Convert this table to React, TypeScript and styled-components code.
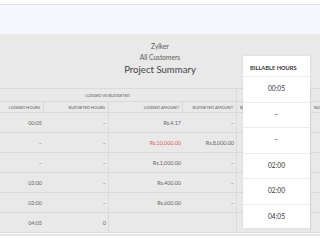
import React from "react";
import styled, { createGlobalStyle } from "styled-components";

const GlobalStyle = createGlobalStyle`
    html, body {
        margin: 0;
        padding: 0;
        background: #ffffff;
        font-family: Lato, "Open Sans", sans-serif;
        overflow: hidden;
    }
`;

const Page = styled.div`
    width: 320px;
    height: 240px;
    position: relative;
    overflow: hidden;
    background: #ffffff;
`;
const TopStrip = styled.div`
    height: 4px;
    border-bottom: 1px solid #e2e2e2;
`;
const InfoBand = styled.div`
    height: 29px;
    background: #f4f8fd;
`;
const Report = styled.div`
    height: 198px;
    background: #e9e9e9;
    border-bottom: 2px solid #ffffff;
    box-shadow: 0 2px 0 #e4e4e4;
`;
const Heading = styled.div`
    height: 54px;
    display: flex;
    flex-direction: column;
    align-items: center;
    padding-top: 7px;
    box-sizing: border-box;
    color: #5a5a5a;
`;
const Org = styled.div`
    font-size: 6.6px;
    line-height: 11px;
`;
const Title = styled.div`
    font-size: 9.6px;
    line-height: 13px;
    color: #444;
`;
const Table = styled.div`
    margin-left: -21px;
    display: grid;
    grid-template-columns: 65px 65px 74px 54px 74px 60px;
`;
const GroupHead = styled.div<{ span: number; line?: boolean }>`
    grid-column: span ${(p) => p.span};
    height: 14px;
    line-height: 14px;
    text-align: center;
    font-size: 4px;
    color: #555;
    border-top: 1px solid #dadada;
    border-bottom: 1px solid #dadada;
    border-right: ${(p) => (p.line ? "1px solid #dadada" : "none")};
    box-sizing: border-box;
`;
const ColHead = styled.div<{ line?: boolean; align?: string }>`
    height: 11px;
    line-height: 11px;
    padding: 0 3px;
    text-align: ${(p) => p.align || "right"};
    font-size: 4px;
    color: #555;
    white-space: nowrap;
    overflow: hidden;
    border-right: ${(p) => (p.line ? "1px solid #dadada" : "none")};
    border-bottom: 1px solid #dadada;
    box-sizing: border-box;
`;
const Cell = styled.div<{ line?: boolean; red?: boolean }>`
    height: 20px;
    line-height: 20px;
    padding: 0 2px;
    text-align: right;
    font-size: 5.4px;
    color: ${(p) => (p.red ? "#e0584f" : "#666")};
    white-space: nowrap;
    border-right: ${(p) => (p.line ? "1px solid #dadada" : "none")};
    border-bottom: 1px solid #dadada;
    box-sizing: border-box;
`;
const Card = styled.div`
    position: absolute;
    left: 243px;
    top: 56px;
    width: 67px;
    background: #ffffff;
    box-shadow: 0 0 3px rgba(0, 0, 0, 0.08);
`;
const CardHead = styled.div`
    height: 21px;
    line-height: 24px;
    padding-left: 7px;
    font-size: 5.7px;
    font-weight: 700;
    color: #333;
    white-space: nowrap;
    border-bottom: 1px solid #ececec;
    box-sizing: border-box;
`;
const CardCell = styled.div<{ last?: boolean }>`
    height: ${(p) => (p.last ? "23px" : "25.5px")};
    line-height: 23px;
    text-align: center;
    font-size: 6.6px;
    color: #333;
    border-bottom: ${(p) => (p.last ? "none" : "1px solid #ececec")};
    box-sizing: border-box;
`;

type Row = { hours: string; budHours: string; amount: string; budAmount: string; billable: string; red?: boolean };

const rows: Row[] = [
    { hours: "00:05", budHours: "–", amount: "Rs.4.17", budAmount: "–", billable: "00:05" },
    { hours: "–", budHours: "–", amount: "Rs.10,000.00", budAmount: "Rs.8,000.00", billable: "–", red: true },
    { hours: "–", budHours: "–", amount: "Rs.1,000.00", budAmount: "–", billable: "–" },
    { hours: "02:00", budHours: "–", amount: "Rs.400.00", budAmount: "–", billable: "02:00" },
    { hours: "02:00", budHours: "–", amount: "Rs.600.00", budAmount: "–", billable: "02:00" },
    { hours: "04:05", budHours: "0", amount: "", budAmount: "", billable: "04:05" },
];

const App = (): JSX.Element => {
    return (
        <>
            <GlobalStyle />
            <Page>
                <TopStrip />
                <InfoBand />
                <Report>
                    <Heading>
                        <Org>Zylker</Org>
                        <Org>All Customers</Org>
                        <Title>Project Summary</Title>
                    </Heading>
                    <Table>
                        <GroupHead span={4} line>LOGGED VS BUDGETED</GroupHead>
                        <GroupHead span={1} line></GroupHead>
                        <GroupHead span={1}></GroupHead>

                        <ColHead line>LOGGED HOURS</ColHead>
                        <ColHead line>BUDGETED HOURS</ColHead>
                        <ColHead line>LOGGED AMOUNT</ColHead>
                        <ColHead line>BUDGETED AMOUNT</ColHead>
                        <ColHead line align="left">BILLABLE HOURS</ColHead>
                        <ColHead align="left">NON-BILLABLE HOURS</ColHead>

                        {rows.map((r, i) => (
                            <React.Fragment key={i}>
                                <Cell>{r.hours}</Cell>
                                <Cell line>{r.budHours}</Cell>
                                <Cell red={r.red}>{r.amount}</Cell>
                                <Cell line>{r.budAmount}</Cell>
                                <Cell line>{r.billable}</Cell>
                                <Cell></Cell>
                            </React.Fragment>
                        ))}
                    </Table>
                </Report>
                <Card>
                    <CardHead>BILLABLE HOURS</CardHead>
                    {rows.map((r, i) => (
                        <CardCell key={i} last={i === rows.length - 1}>
                            {r.billable}
                        </CardCell>
                    ))}
                </Card>
            </Page>
        </>
    );
};

export default App;
